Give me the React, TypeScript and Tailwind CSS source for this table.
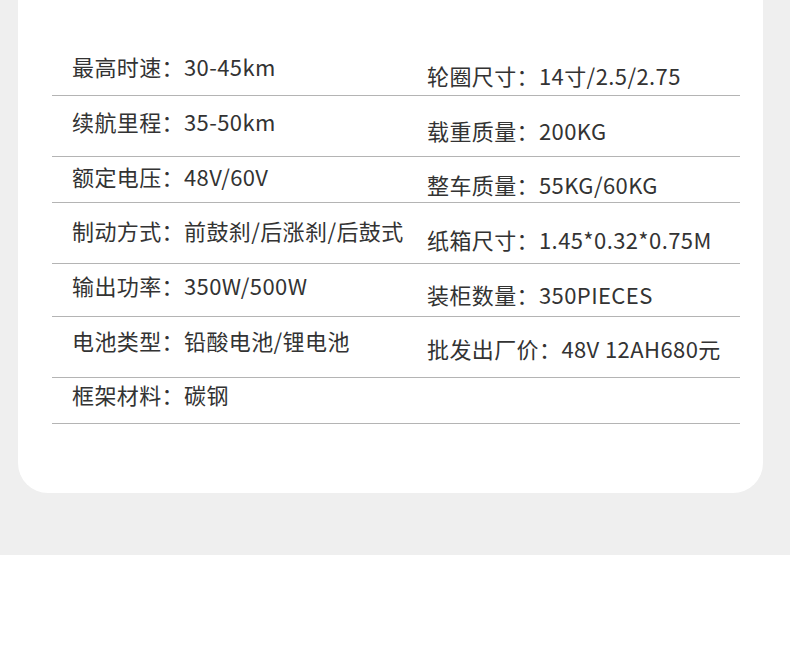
const rows = [
  { h: 'h-[96px]', left: '最高时速：30-45km', lt: 'mt-[55px]', right: '轮圈尺寸：14寸/2.5/2.75', rt: 'mt-[64px]' },
  { h: 'h-[61px]', left: '续航里程：35-50km', lt: 'mt-[14px]', right: '载重质量：200KG', rt: 'mt-[23px]' },
  { h: 'h-[46px]', left: '额定电压：48V/60V', lt: 'mt-[8px]', right: '整车质量：55KG/60KG', rt: 'mt-[16px]' },
  { h: 'h-[61px]', left: '制动方式：前鼓刹/后涨刹/后鼓式', lt: 'mt-[16px]', right: '纸箱尺寸：1.45*0.32*0.75M', rt: 'mt-[25px]' },
  { h: 'h-[53px]', left: '输出功率：350W/500W', lt: 'mt-[10px]', right: '装柜数量：350PIECES', rt: 'mt-[19px]' },
  { h: 'h-[61px]', left: '电池类型：铅酸电池/锂电池', lt: 'mt-[12px]', right: '批发出厂价：48V 12AH680元', rt: 'mt-[20px]' },
  { h: 'h-[46px]', left: '框架材料：碳钢', lt: 'mt-[5px]', right: '', rt: '' },
];

export default function App() {
  return (
    <div className="w-[790px] bg-white" style={{ fontFamily: '"Noto Sans CJK SC", "Noto Sans", sans-serif' }}>
      <div className="h-[555px] bg-[#efefef] pl-[18px]">
        <div className="h-[493px] w-[745px] rounded-b-[30px] bg-white pl-[34px]">
          <div className="w-[688px]">
            {rows.map((r, i) => (
              <div key={i} className={`flex border-b border-[#b4b4b4] ${r.h}`}>
                <div className="w-[375px] pl-[20px]">
                  <div className={`text-[22px] leading-[22px] tracking-[0.4px] text-[#333333] whitespace-nowrap ${r.lt}`}>{r.left}</div>
                </div>
                <div className="flex-1">
                  {r.right && (
                    <div className={`text-[22px] leading-[22px] tracking-[0.4px] text-[#333333] whitespace-nowrap ${r.rt}`}>{r.right}</div>
                  )}
                </div>
              </div>
            ))}
          </div>
        </div>
      </div>
      <div className="h-[97px]" />
    </div>
  );
}
